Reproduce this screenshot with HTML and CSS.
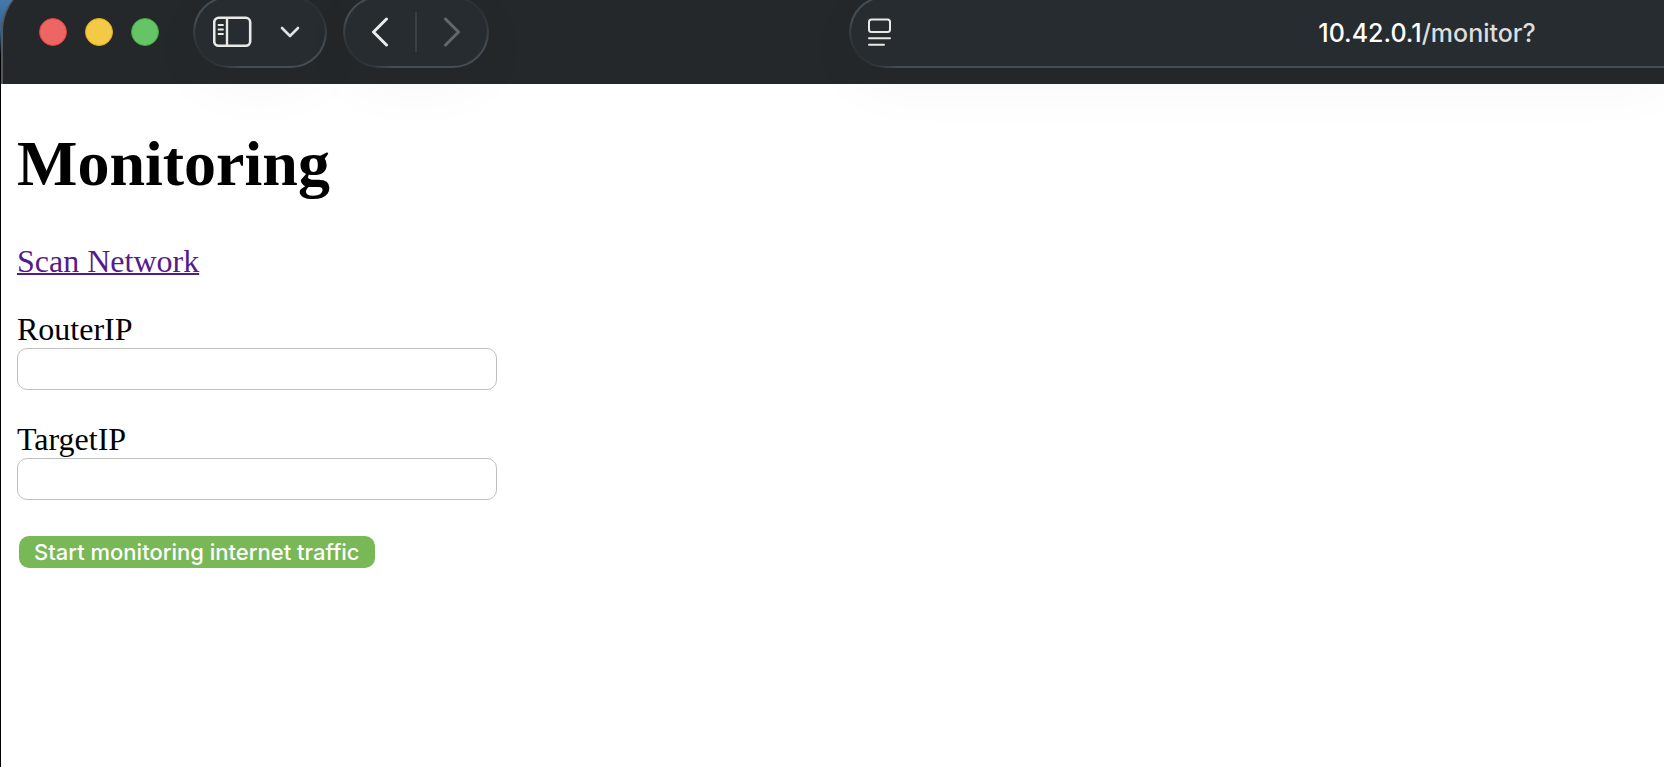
FILE: index.html
```html
<!DOCTYPE html>
<html lang="en">
<head>
  <meta charset="UTF-8">
  <title>Monitoring</title>
  <link rel="stylesheet" href="styles.css">
</head>
<body>

  <header class="toolbar">
    <div class="lights">
      <span class="light red"></span>
      <span class="light yellow"></span>
      <span class="light green"></span>
    </div>

    <div class="pill sidebar-group">
      <button class="icon-btn" type="button" aria-label="Show sidebar">
        <svg width="40" height="32" viewBox="0 0 40 32" fill="none" stroke="#e9e9e6">
          <rect x="1.2" y="1.8" width="36" height="28" rx="4.5" stroke-width="2.6"/>
          <path d="M14 2v27" stroke-width="2.4"/>
          <path d="M5.5 9h4.500M5.500 13.500h4.500M5.500 18h4.500" stroke-width="1.8" stroke-linecap="round"/>
        </svg>
      </button>
      <button class="icon-btn" type="button" aria-label="Tab groups">
        <svg width="20" height="12" viewBox="0 0 20 12" fill="none" stroke="#e0e1e2" stroke-width="2.6" stroke-linecap="round" stroke-linejoin="round">
          <path d="M2 2l8 8 8-8"/>
        </svg>
      </button>
    </div>

    <div class="pill nav-group">
      <button class="icon-btn" type="button" aria-label="Back">
        <svg width="18" height="30" viewBox="0 0 18 30" fill="none" stroke="#ececec" stroke-width="3" stroke-linecap="round" stroke-linejoin="round">
          <path d="M15.500 2L2.500 15l13 13"/>
        </svg>
      </button>
      <span class="divider"></span>
      <button class="icon-btn" type="button" aria-label="Forward">
        <svg width="18" height="30" viewBox="0 0 18 30" fill="none" stroke="#64686b" stroke-width="3" stroke-linecap="round" stroke-linejoin="round">
          <path d="M2.500 2l13 13-13 13"/>
        </svg>
      </button>
    </div>

    <div class="pill address">
      <button class="icon-btn" type="button" aria-label="Page menu">
        <svg width="24" height="28" viewBox="0 0 24 28" fill="none" stroke="#e9e9e6">
          <rect x="1" y="1.500" width="21" height="12.500" rx="2.500" stroke-width="2"/>
          <path d="M1 20.300h21M1 26.700h15" stroke-width="2" stroke-linecap="round"/>
        </svg>
      </button>
      <div class="url">10.42.0.1<span class="path">/monitor?</span></div>
    </div>
  </header>

  <main>
    <h1>Monitoring</h1>
    <p><a href="#scan">Scan Network</a></p>

    <form>
      <div class="field">
        <label for="router">RouterIP</label>
        <input type="text" id="router" name="router">
      </div>
      <div class="field">
        <label for="target">TargetIP</label>
        <input type="text" id="target" name="target">
      </div>
      <button class="start-btn" type="submit">Start monitoring internet traffic</button>
    </form>
  </main>

</body>
</html>
```

FILE: styles.css
```css
* {
  box-sizing: border-box;
}
html {
  background: linear-gradient(#4379ad, #35648f 30px, #000 56px);
}
body {
  margin: 0 0 0 1px;
  min-height: 100vh;
  overflow: hidden;
  display: flex;
  flex-direction: column;
  font-family: "Liberation Serif", "Times New Roman", serif;
  font-size: 32px;
  line-height: 34px;
}

/* browser toolbar, top edge runs off the screen */
.toolbar {
  display: flex;
  align-items: center;
  height: 104px;
  margin-top: -20px;
  padding: 0 0 0 36px;
  background: #24282b;
  border-left: 2px solid #55595b;
  border-top-left-radius: 52px;
  position: relative;
}
.lights {
  display: flex;
  gap: 18px;
  margin-right: 34px;
}
.light {
  width: 28px;
  height: 28px;
  border-radius: 50%;
}
.red {
  background: #ee6664;
  border: 1px solid #dc403e;
}
.yellow {
  background: #f3c945;
  border: 1px solid #e3ae1d;
}
.green {
  background: #65c466;
  border: 1px solid #3da83f;
}
.pill {
  display: flex;
  align-items: center;
  height: 72px;
  border: 2px solid transparent;
  border-radius: 36px;
  background: linear-gradient(#272c30, #272c30) padding-box,
    linear-gradient(45deg, #2b3034 16px, #434e57 36px, #434e57 calc(100% - 36px), #2b3034 calc(100% - 16px)) border-box;
  box-shadow: 0 16px 60px rgba(0, 0, 0, 0.04);
}
.sidebar-group {
  width: 134px;
  padding: 0 25px 0 18px;
  justify-content: space-between;
  margin-right: 16px;
}
.nav-group {
  width: 146px;
  padding: 0 26px;
  justify-content: space-between;
  margin-right: 360px;
}
.divider {
  width: 2px;
  height: 40px;
  background: #3a3f43;
}
.address {
  flex: 1;
  padding-left: 17px;
  border-right: none;
  border-radius: 36px 0 0 36px;
}
.icon-btn {
  display: flex;
  padding: 0;
  border: none;
  background: none;
}
.url {
  flex: 1;
  padding: 2px 0 0 298px;
  text-align: center;
  font-family: Inter, sans-serif;
  font-size: 25px;
  font-weight: 500;
  color: #fff;
}
.path {
  color: #dcdddd;
}

/* page */
main {
  flex: 1;
  padding: 0 16px;
  background: #fff;
}
h1 {
  margin: 43px 0;
  font-size: 64px;
  line-height: 74px;
}
p {
  margin: 0 0 34px;
}
a {
  color: #551a8b;
  text-decoration-thickness: 2px;
}
.field {
  margin-bottom: 32px;
}
.field label {
  display: block;
  margin-bottom: 2px;
}
.field input {
  display: block;
  width: 480px;
  max-width: 100%;
  height: 42px;
  padding: 4px 8px;
  border: 1px solid #bfbfbf;
  border-radius: 10px;
  font-family: Inter, sans-serif;
  font-size: 22px;
}
.start-btn {
  display: block;
  height: 32px;
  margin: 36px 2px;
  padding: 0 15px;
  border: none;
  border-radius: 10px;
  background: #79b857;
  color: #fff;
  font-family: Inter, sans-serif;
  font-size: 22px;
  font-weight: 500;
  line-height: 32px;
}
```
